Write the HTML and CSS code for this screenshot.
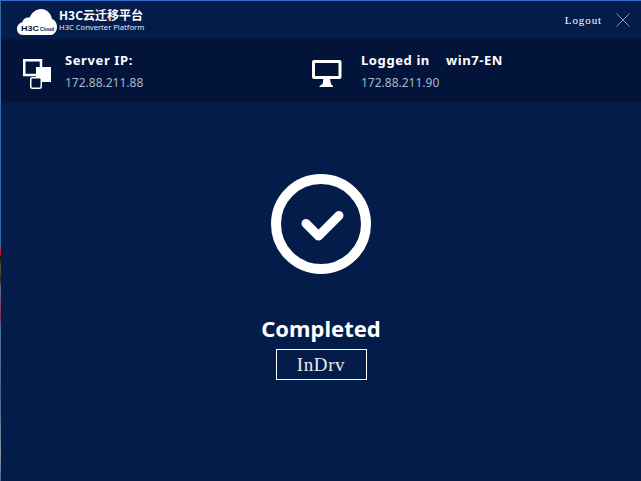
FILE: index.html
```html
<!DOCTYPE html>
<html lang="en">
<head>
<meta charset="utf-8">
<title>H3C Converter Platform</title>
<link rel="stylesheet" href="styles.css">
</head>
<body>
<div class="window">
  <header class="titlebar">
    <div class="brand">
      <svg class="cloud" width="40" height="26" viewBox="0 0 40 26">
        <path fill="#fff" d="M6 26C2 26 0 23 0 20c0-3 2-6 5-6.500C6 10 9 8 12.500 8.500 15 3.500 19 0 24 0c6 0 10 4.500 11 10 3 1 5 4 5 8 0 4-3 8-6 8z"/>
        <text x="4" y="21.500" class="cloud-h3c" textLength="18" lengthAdjust="spacingAndGlyphs">H3C</text>
        <text x="23" y="21.500" class="cloud-word" textLength="14" lengthAdjust="spacingAndGlyphs">Cloud</text>
      </svg>
      <div class="brand-text">
        <div class="brand-cn">H3C云迁移平台</div>
        <div class="brand-en">H3C Converter Platform</div>
      </div>
    </div>
    <div class="actions">
      <span class="logout">Logout</span>
      <svg class="close" width="14" height="14" viewBox="0 0 14 14"><path d="M0.500 0.500 13.500 13.500M13.500 0.500 0.500 13.500" stroke="#8b97ad" stroke-width="1" fill="none"/></svg>
    </div>
  </header>
  <section class="infobar">
    <div class="info info-server">
      <svg width="29" height="30" viewBox="0 0 29 30" class="info-icon">
        <path fill="none" stroke="#fff" stroke-width="2.500" d="M13 16H1.250V1.250H18V8"/>
        <rect x="13" y="8" width="15" height="15" fill="#fff"/>
        <rect x="7.750" y="18.750" width="10.500" height="10.500" rx="1.500" fill="#03143b" stroke="#fff" stroke-width="1.500"/>
      </svg>
      <div class="info-text">
        <div class="info-title">Server IP:</div>
        <div class="info-ip">172.88.211.88</div>
      </div>
    </div>
    <div class="info info-client">
      <svg width="30" height="27" viewBox="0 0 30 27" class="info-icon">
        <rect x="1.500" y="1.500" width="26.500" height="16" rx="0.500" fill="none" stroke="#fff" stroke-width="3"/>
        <path fill="#fff" d="M11.500 19h6.500l1 5 2 2v1H7.500v-1l3-2z"/>
      </svg>
      <div class="info-text">
        <div class="info-title">Logged in<span class="host">win7-EN</span></div>
        <div class="info-ip">172.88.211.90</div>
      </div>
    </div>
  </section>
  <main class="content">
    <svg class="done" width="100" height="100" viewBox="0 0 100 100">
      <circle cx="50" cy="50" r="45" fill="none" stroke="#fff" stroke-width="10"/>
      <path d="M35 49.500 47.500 62 68 41.500" fill="none" stroke="#fff" stroke-width="9" stroke-linecap="round" stroke-linejoin="round"/>
    </svg>
    <h1 class="status">Completed</h1>
    <div class="driver">InDrv</div>
  </main>
</div>
</body>
</html>
```
FILE: styles.css
```css
* { box-sizing: border-box; }
html, body { margin: 0; padding: 0; }
body {
  width: 641px;
  height: 481px;
  overflow: hidden;
  padding-left: 1px;
  background: linear-gradient(to bottom,
    #3a6aa8 0, #3a6aa8 240px, #3d6a9e 246px, #c2152a 250px, #c2152a 254px,
    #16130f 257px, #5c5a2e 268px, #2e2c22 280px, #4f6f96 288px, #8c2f4a 318px,
    #4f6f96 326px, #4d6690 400px, #8c93a0 455px, #4d6690 481px);
}
.window {
  width: 640px;
  height: 481px;
  display: flex;
  flex-direction: column;
  background: #041c4a;
  border-top: 1px solid #2f6fd0;
  font-family: "Noto Sans", "Noto Sans CJK SC", sans-serif;
  color: #fff;
}
.titlebar {
  height: 38px;
  flex: none;
  display: flex;
  justify-content: space-between;
  align-items: center;
  padding: 0 11px 0 16px;
}
.brand { display: flex; align-items: center; gap: 2px; margin-top: 3px; }
.cloud { display: block; }
.cloud-h3c { font: bold 8px "Liberation Sans", sans-serif; fill: #03143b; }
.cloud-word { font: bold 6px "Liberation Sans", sans-serif; fill: #03143b; }
.brand-text { display: flex; flex-direction: column; margin-top: -4px; }
.brand-cn { font-size: 12px; font-weight: 700; line-height: 14px; font-family: "Noto Sans CJK SC", sans-serif; white-space: nowrap; }
.brand-en { font-size: 7.600px; line-height: 10px; color: #e6eaf2; white-space: nowrap; }
.actions { display: flex; align-items: center; gap: 14px; }
.logout { font-family: "Liberation Serif", serif; font-size: 11px; letter-spacing: 0.9px; }
.close { display: block; }
.infobar {
  height: 64px;
  flex: none;
  display: flex;
  background: #03143b;
  padding-left: 22px;
}
.info { display: flex; align-items: center; }
.info-server { width: 289px; }
.info-icon { display: block; flex: none; }
.info-server .info-icon { margin-right: 13px; margin-top: 5px; }
.info-client .info-icon { margin-right: 19px; margin-top: 5px; }
.info-text { display: flex; flex-direction: column; gap: 7px; margin-top: 1px; }
.info-title { font-size: 13px; font-weight: 700; line-height: 16px; letter-spacing: 0.6px; white-space: nowrap; }
.host { margin-left: 16px; }
.info-ip { font-size: 12px; line-height: 16px; color: #a9b6c9; white-space: nowrap; }
.content {
  flex: 1;
  display: flex;
  flex-direction: column;
  align-items: center;
  padding-top: 71px;
}
.done { display: block; }
.status { margin: 41px 0 0; font-size: 22px; line-height: 27px; font-weight: 700; }
.driver {
  width: 91px;
  height: 31px;
  margin-top: 7px;
  border: 1px solid #fff;
  display: flex;
  align-items: center;
  justify-content: center;
  font-family: "Liberation Serif", serif;
  font-size: 19px;
  letter-spacing: 0.6px;
  color: #e8ecf4;
}
```
